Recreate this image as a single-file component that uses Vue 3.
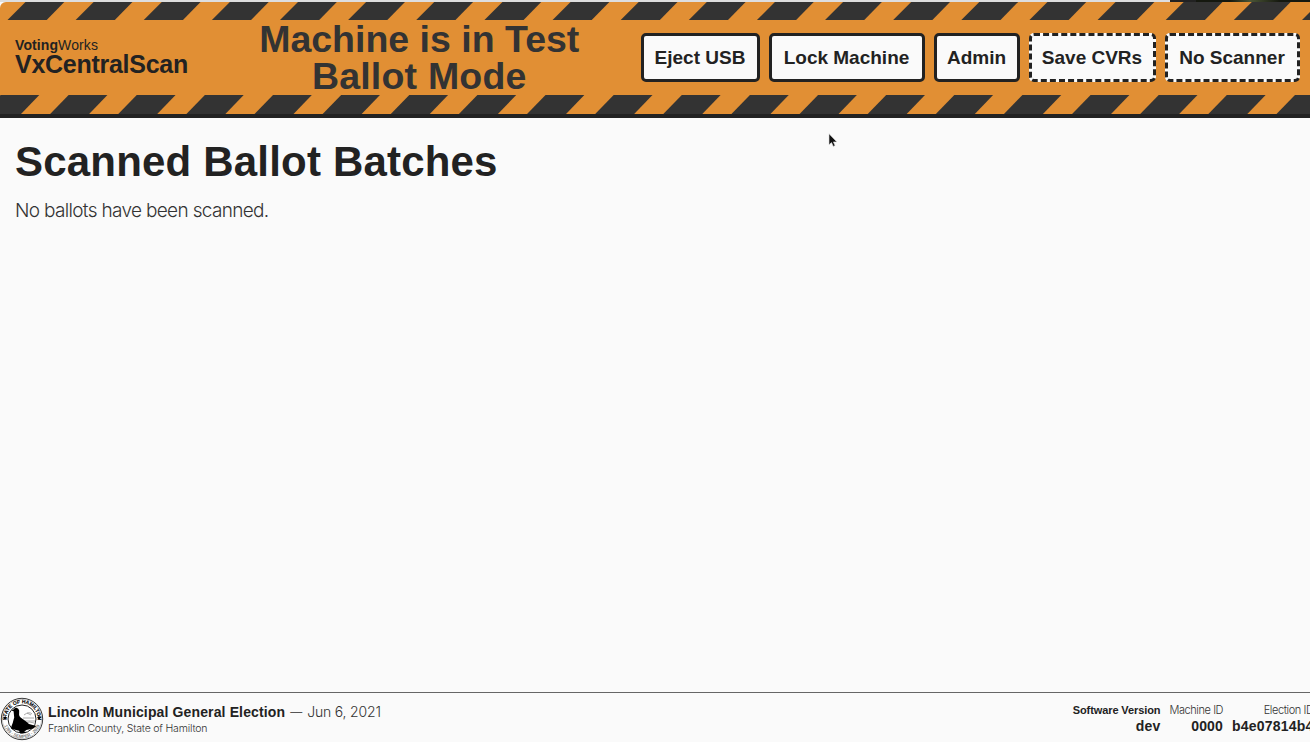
<script setup>
const stripes = Array.from({ length: 21 }, (_, i) => (i - 1) * 68.13)
const buttons = [
  { label: 'Eject USB', w: 119, dashed: false },
  { label: 'Lock Machine', w: 156, dashed: false },
  { label: 'Admin', w: 86, dashed: false },
  { label: 'Save CVRs', w: 127, dashed: true },
  { label: 'No Scanner', w: 135, dashed: true },
]
const meta = [
  { label: 'Software Version', value: 'dev', bold: true, cls: 'software' },
  { label: 'Machine ID', value: '0000', bold: false, cls: 'machine' },
  { label: 'Election ID', value: 'b4e07814b4', bold: false, cls: 'election' },
]
</script>

<template>
  <div class="screen">
    <div class="strip"><i class="thumb"></i></div>
    <header class="bar">
      <svg class="tape" width="1310" height="18" viewBox="0 0 1310 18">
        <polygon v-for="x in stripes" :key="x" :points="`${x + 7.5},18 ${x + 25.5},0 ${x + 64.3},0 ${x + 46.7},18`" />
      </svg>
      <div class="row">
        <div class="brand">
          <div class="company"><b>Voting</b><span>Works</span></div>
          <div class="product">VxCentralScan</div>
        </div>
        <div class="mode"><span class="m1">Machine is in Test</span><span class="m2">Ballot Mode</span></div>
        <nav class="actions">
          <button v-for="b in buttons" :key="b.label" :class="{ dashed: b.dashed }" :style="{ width: b.w + 'px' }">{{ b.label }}</button>
        </nav>
      </div>
      <svg class="tape" width="1310" height="19" viewBox="0 0 1310 19">
        <polygon v-for="x in stripes" :key="x" :points="`${x - 18},19 ${x + 0.5},0 ${x + 39.3},0 ${x + 21},19`" />
      </svg>
    </header>
    <main>
      <h1>Scanned Ballot Batches</h1>
      <p>No ballots have been scanned.</p>
    </main>
    <footer>
      <svg class="seal" width="44" height="44" viewBox="0 0 44 44">
        <defs>
          <path id="arcTop" d="M6.3 22a15.7 15.7 0 0 1 31.4 0" />
          <path id="arcBottom" d="M3.2 24a18.9 18.9 0 0 0 37.6 0" />
        </defs>
        <circle cx="22" cy="22" r="20.7" fill="#fff" stroke="#222" stroke-width=".9" />
        <circle cx="22" cy="22" r="19.6" fill="none" stroke="#777" stroke-width=".4" />
        <circle cx="22" cy="22" r="14" fill="#fff" stroke="#222" stroke-width="1" />
        <text class="top"><textPath href="#arcTop" startOffset="50%" text-anchor="middle">STATE OF HAMILTON</textPath></text>
        <text class="bottom"><textPath href="#arcBottom" startOffset="50%" text-anchor="middle">1789 · SEMPER · 2020</textPath></text>
        <path d="M5.1 18.4l.7 1.5 1.5.1-1.2 1.1.5 1.5-1.5-.8-1.3.8.4-1.5-1.1-1.1 1.5-.1zM38.9 18.4l.7 1.5 1.5.1-1.2 1.1.5 1.5-1.5-.8-1.3.8.4-1.5-1.1-1.1 1.5-.1z" />
        <path d="M24 18q5-4 8-1M23 21h11M25 24h10M27 16l4 2M25 26q5-2 9 0" fill="none" stroke="#888" stroke-width=".7" />
        <path d="M11.3 13.6l2.2-1.2q1-1.8 3-1.6 2.2.4 2.7 2.8l-.1 4.4q.3 1.8 1.8 2.8l4.6 3.2 3.5 3 7.3 2-3 2.4-7 1.6-2 1.8 2.4 1.2-6.4.4-1.3-2.6-7-1.8q-1.6-.4-.8-2l1.6-4.2q.6-2.4 1.4-5.2l-.6-6.3z" />
      </svg>
      <div class="contest">
        <div class="line1"><b>Lincoln Municipal General Election</b><i>—</i><span>Jun 6, 2021</span></div>
        <div class="line2">Franklin County, State of Hamilton</div>
      </div>
      <div class="meta">
        <div v-for="m in meta" :key="m.label" :class="m.cls">
          <div class="label" :class="{ bold: m.bold }">{{ m.label }}</div>
          <div class="value">{{ m.value }}</div>
        </div>
      </div>
    </footer>
    <svg class="cursor" width="12" height="16" viewBox="0 0 12 16">
      <path d="M1 .8v11l2.5-2.2 1.8 3.8 1.8-.8-1.7-3.7h3.5z" fill="#111" stroke="#ddd" stroke-width=".6" />
    </svg>
  </div>
</template>

<style>
body { margin: 0; overflow: hidden; background: #fafafa; }
</style>

<style scoped>
.screen { position: relative; width: 1310px; height: 742px; overflow: hidden; display: flex; flex-direction: column; background: #fafafa; color: #222; font-family: "Liberation Sans", Arial, sans-serif; white-space: nowrap; }
.strip { height: 2px; background: #dedede; display: flex; justify-content: flex-end; flex: none; }
.thumb { width: 140px; background: linear-gradient(90deg, #222 0 26px, #15180f 26px 60px, #4b5636 80px, #15180f 110px); }
.bar { height: 111.6px; background: #e18f34; border-bottom: 4px solid #222; border-top-left-radius: 6px; display: flex; flex-direction: column; flex: none; overflow: hidden; }
.tape { display: block; fill: #333; flex: none; }
.row { height: 75px; display: flex; align-items: center; flex: none; }
.brand { width: 173px; margin: 0 10px 3px 15px; }
.company { font-size: 14px; line-height: 16px; letter-spacing: .1px; }
.product { font-size: 25px; line-height: 23px; font-weight: 700; letter-spacing: -.27px; }
.mode { flex: 1; text-align: center; font-size: 37.5px; line-height: 37px; font-weight: 700; color: #333; }
.mode span { display: block; }
.m2 { letter-spacing: .2px; }
.actions { display: flex; gap: 9px; margin-right: 10.5px; }
button { box-sizing: border-box; flex: none; height: 49px; padding: 0; border: 3px solid #222; border-radius: 5px; background: #fafafa; color: #222; font: 700 19px/43px "Liberation Sans", Arial, sans-serif; }
.dashed { border-style: dashed; }
main { flex: 1; padding: 20.4px 15px 0; }
h1 { margin: 0; font-size: 42px; line-height: 48px; letter-spacing: .19px; }
p { margin: 13px 0 0; font-size: 19px; line-height: 24px; color: #333; font-family: Inter, sans-serif; font-weight: 300; letter-spacing: -.67px; }
footer { height: 49px; border-top: 1px solid #666; display: flex; align-items: flex-start; flex: none; }
.seal { margin: 4px 4px 0 0; flex: none; }
.seal text { font-family: "Liberation Sans", Arial, sans-serif; font-weight: 700; }
.top { font-size: 5px; stroke: #111; stroke-width: .15px; }
.bottom { font-size: 4.4px; fill: #777; }
.contest { flex: 1; padding-top: 10px; }
.line1 { font-size: 14px; line-height: 18px; display: flex; letter-spacing: .135px; }
.line1 i { font-style: normal; font-size: 12px; color: #555; margin: 0 5px; letter-spacing: 0; }
.line1 span, .line2, .label { font-family: Inter, sans-serif; font-weight: 300; color: #333; }
.line1 span { letter-spacing: -.18px; }
.line2 { font-size: 10.5px; line-height: 15px; letter-spacing: -.19px; }
.meta { display: flex; gap: 9px; text-align: right; padding-top: 10px; margin-right: -3.5px; }
.label { font-size: 11px; line-height: 15px; letter-spacing: -.42px; }
.label.bold { font-family: "Liberation Sans", Arial, sans-serif; font-weight: 700; color: #222; letter-spacing: -.1px; }
.value { font-size: 14px; line-height: 17px; font-weight: 700; letter-spacing: .2px; }
.cursor { position: absolute; left: 828px; top: 133px; }
</style>
